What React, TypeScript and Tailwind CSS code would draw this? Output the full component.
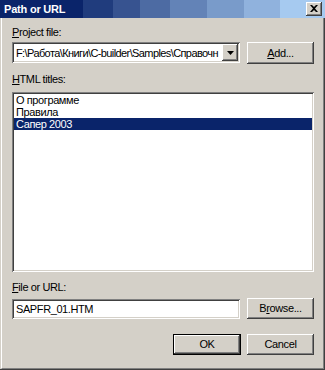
import React from "react";

const raised =
  "shadow-[inset_-1px_-1px_#404040,inset_1px_1px_#ffffff,inset_-2px_-2px_#808080,inset_2px_2px_#d4d0c8]";
const sunken =
  "shadow-[inset_1px_1px_#808080,inset_-1px_-1px_#ffffff,inset_2px_2px_#404040,inset_-2px_-2px_#d4d0c8]";

function Btn({ children, w, h, def }: { children: React.ReactNode; w: string; h: string; def?: boolean }) {
  if (def) {
    return (
      <div className={`${w} ${h} border border-black bg-[#d4d0c8] flex`}>
        <div className="flex-1 flex items-center justify-center shadow-[inset_-1px_-1px_#404040,inset_1px_1px_#ffffff,inset_-2px_-2px_#808080]">
          {children}
        </div>
      </div>
    );
  }
  return (
    <div className={`${w} ${h} bg-[#d4d0c8] flex items-center justify-center ${raised}`}>{children}</div>
  );
}

export default function App() {
  const bands = [
    "#0a246a 0px 83px",
    "#203c7d 83px 113px",
    "#375390 113px 140px",
    "#4d6ba3 140px 170px",
    "#6383b7 170px 207px",
    "#799bca 207px 244px",
    "#90b2dd 244px 280px",
    "#a6caf0 280px 325px",
  ];
  return (
    <div
      className="w-[325px] h-[370px] bg-[#d4d0c8] flex flex-col text-black text-[11px] leading-[13px] tracking-[-0.4px] overflow-hidden"
      style={{ fontFamily: '"Liberation Sans", Arial, sans-serif' }}
    >
      {/* Title bar */}
      <div
        className="h-[18px] flex items-center justify-between pl-[4px] pr-[3px] shrink-0"
        style={{ background: `linear-gradient(to right, ${bands.join(", ")})` }}
      >
        <span className="text-white font-bold text-[11px] tracking-[-0.2px]">Path or URL</span>
        <div className={`w-[16px] h-[14px] bg-[#d4d0c8] flex items-center justify-center ${raised}`}>
          <svg width="8" height="7" viewBox="0 0 8 7" className="mt-[-1px]">
            <path d="M0 0h2l2 2 2-2h2l-3 3.5 3 3.5h-2l-2-2-2 2h-2l3-3.5z" fill="#000" />
          </svg>
        </div>
      </div>

      {/* Body */}
      <div className="flex-1 pl-[1px] border-r border-b border-[#404040] flex">
        <div className="flex-1 border-l border-white border-r border-b border-r-[#808080] border-b-[#808080] pl-[10px] pr-[9px] pt-[8px] flex flex-col">
          <div className="h-[13px]">
            <u>P</u>roject file:
          </div>

          <div className="mt-[3px] flex items-start gap-[7px]">
            <div className={`w-[228px] h-[21px] bg-white ${sunken} flex items-center p-[2px]`}>
              <div className="flex-1 min-w-0 whitespace-nowrap pl-[2px] pt-[1px] tracking-[-0.6px]">
                F:\Работа\Книги\C-builder\Samples\Справочн
              </div>
              <div className={`w-[16px] h-[17px] bg-[#d4d0c8] ${raised} flex items-center justify-center shrink-0`}>
                <svg width="7" height="4" viewBox="0 0 7 4">
                  <path d="M0 0h7l-3.5 4z" fill="#000" />
                </svg>
              </div>
            </div>
            <Btn w="w-[67px]" h="h-[22px]">
              <span>
                <u>A</u>dd...
              </span>
            </Btn>
          </div>

          <div className="mt-[9px] h-[13px]">
            <u>H</u>TML titles:
          </div>

          <div className={`mt-[6px] h-[180px] bg-white ${sunken} p-[2px] flex flex-col`}>
            <div className="h-[12px] leading-[12px] pl-[2px]">О программе</div>
            <div className="h-[12px] leading-[12px] pl-[2px]">Правила</div>
            <div className="h-[12px] leading-[12px] pl-[2px] bg-[#0a246a] text-white">Сапер 2003</div>
          </div>

          <div className="mt-[9px] h-[13px]">
            <u>F</u>ile or URL:
          </div>

          <div className="mt-[4px] flex items-start gap-[7px]">
            <div className={`mt-[1px] w-[228px] h-[20px] bg-white ${sunken} flex items-center pl-[4px] pt-[1px]`}>
              SAPFR_01.HTM
            </div>
            <Btn w="w-[67px]" h="h-[21px]">
              <span>
                B<u>r</u>owse...
              </span>
            </Btn>
          </div>

          <div className="mt-[15px] flex justify-end gap-[6px]">
            <Btn w="w-[68px]" h="h-[21px]" def>
              OK
            </Btn>
            <Btn w="w-[67px]" h="h-[21px]">
              Cancel
            </Btn>
          </div>
        </div>
      </div>
    </div>
  );
}
